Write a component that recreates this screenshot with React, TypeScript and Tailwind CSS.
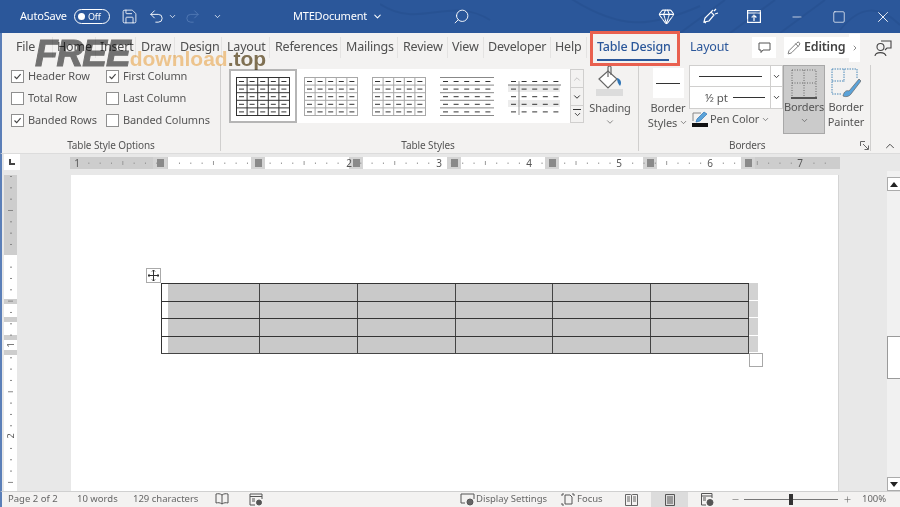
import { ChevronDown, ChevronRight, ChevronUp, Gem, Minus, Pencil, Plus, Redo2, Save, Search, Square, Undo2, X } from 'lucide-react';

const TABS: [string, string][] = [
  ['File', 'w-[51px] pl-[14px]'],
  ['Home', 'w-[43px] pl-[4px]'],
  ['Insert', 'w-[40px] pl-[4px]'],
  ['Draw', 'w-[39px] pl-[5px]'],
  ['Design', 'w-[47px] pl-[5px]'],
  ['Layout', 'w-[48px] pl-[5px]'],
  ['References', 'w-[71px] pl-[5px]'],
  ['Mailings', 'w-[57px] pl-[5px]'],
  ['Review', 'w-[50px] pl-[5px]'],
  ['View', 'w-[36px] pl-[4px]'],
  ['Developer', 'w-[67px] pl-[4px]'],
  ['Help', 'w-[36px] pl-[4px]'],
];

const OPTIONS: [string, boolean, string, boolean][] = [
  ['Header Row', true, 'First Column', true],
  ['Total Row', false, 'Last Column', false],
  ['Banded Rows', true, 'Banded Columns', false],
];

function Check({ label, checked }: { label: string; checked: boolean }) {
  return (
    <div className="flex h-[14px] items-center gap-[4px] leading-[14px]">
      <span className="flex h-[13px] w-[13px] shrink-0 items-center justify-center border border-[#8f8f8f] bg-white">
        {checked && (
          <svg width="9" height="9" viewBox="0 0 9 9" fill="none" stroke="#444" strokeWidth="1.1">
            <path d="M1.5 4.5 L3.7 6.7 L7.6 2.2" />
          </svg>
        )}
      </span>
      <span className="whitespace-nowrap">{label}</span>
    </div>
  );
}

// small preview of a table style in the gallery
function Thumb({ kind }: { kind: number }) {
  const rows = [0, 1, 2, 3, 4];
  const cols = [0, 1, 2, 3, 4];
  const line = kind === 0 ? '#333' : '#a8a8a8';
  return (
    <svg width="54" height="39" viewBox="0 0 54 39" className="shrink-0">
      {kind === 3 && <rect x="0" y="8" width="52" height="7" fill="#ececec" />}
      {kind === 3 && <rect x="0" y="23" width="52" height="7" fill="#ececec" />}
      {kind < 2 && <rect x="0.5" y="0.5" width="53" height="38" fill="none" stroke={line} />}
      {kind < 3 &&
        [1, 2, 3, 4].map((r) => <line key={r} x1="0" x2="54" y1={r * 7.6 + 0.5} y2={r * 7.6 + 0.5} stroke={kind === 2 ? '#888' : line} />)}
      {kind === 2 && <line x1="0" x2="54" y1="0.5" y2="0.5" stroke="#888" />}
      {kind === 2 && <line x1="0" x2="54" y1="38.5" y2="38.5" stroke="#888" />}
      {kind < 2 &&
        [1, 2, 3, 4].map((c) => <line key={c} y1="0" y2="39" x1={c * 10.6 + 0.5} x2={c * 10.6 + 0.5} stroke={line} />)}
      {kind === 3 && <line x1="0" x2="53" y1="8" y2="8" stroke="#777" />}
      {kind === 3 && <line x1="11" x2="11" y1="4" y2="38" stroke="#999" />}
      {rows.map((r) =>
        cols.map((c) => (
          <line key={`${r}${c}`} x1={c * 10.6 + 3} x2={c * 10.6 + 8} y1={r * 7.6 + 4.5} y2={r * 7.6 + 4.5} stroke="#333" strokeWidth="1" />
        )),
      )}
    </svg>
  );
}

function HRuler() {
  const marks = [160, 258, 356, 454, 552, 650, 748];
  const nums: [string, number][] = [['1', 77], ['2', 349], ['3', 439], ['4', 529], ['5', 619], ['6', 710], ['7', 800]];
  const ticks: number[] = [];
  for (let k = 1; k < 67; k++) ticks.push(k);
  return (
    <svg width="900" height="12" viewBox="0 0 900 12" className="block">
      <rect x="70" y="0" width="770" height="12" fill="#fff" />
      <rect x="70" y="0" width="98" height="12" fill="#cdcdcd" />
      <rect x="742" y="0" width="98" height="12" fill="#cdcdcd" />
      {marks.map((m) => (
        <rect key={m} x={m - 7} y="0" width="14" height="12" fill="#d4d4d4" />
      ))}
      {ticks.map((k) => {
        if (k % 8 === 0) return null;
        const big = k % 8 === 4;
        return <rect key={k} x={77 + k * 11.33} y={big ? 4 : 5.5} width="1" height={big ? 4 : 1.5} fill="#999" />;
      })}
      {marks.map((m) => (
        <rect key={m} x={m - 3} y="2" width="7" height="8" fill="#8a8a8a" />
      ))}
      {nums.map(([n, x]) => (
        <text key={n} x={x} y="10" fontSize="10" fill="#555" textAnchor="middle" fontFamily="Noto Sans, sans-serif">{n}</text>
      ))}
    </svg>
  );
}

function VRuler() {
  const bands = [124, 142, 160, 175];
  const ticks: number[] = [];
  for (let i = 0; i < 28; i++) ticks.push(i);
  return (
    <svg width="13" height="316" viewBox="0 0 13 316" className="block">
      <rect width="13" height="316" fill="#fff" />
      <rect width="13" height="80" fill="#cdcdcd" />
      {bands.map((b) => (
        <rect key={b} y={b} width="13" height="5" fill="#cdcdcd" />
      ))}
      {ticks.map((i) =>
        i % 8 === 7 ? null : (
          <rect key={i} x={i % 8 === 3 ? 4 : 6} y={i * 11.33 + 1} width={i % 8 === 3 ? 5 : 2} height="1" fill="#888" />
        ),
      )}
      <text x="0" y="0" fontSize="9" fill="#555" textAnchor="middle" transform="translate(10 170) rotate(-90)" fontFamily="Noto Sans, sans-serif">1</text>
      <text x="0" y="0" fontSize="9" fill="#555" textAnchor="middle" transform="translate(10 261) rotate(-90)" fontFamily="Noto Sans, sans-serif">2</text>
    </svg>
  );
}

function WordTable() {
  return (
    <div className="flex w-[603px] flex-col">
      {[0, 1, 2, 3].map((r) => (
        <div key={r} className="flex h-[17.5px]">
          <div className="grid w-[588px] grid-cols-6 border-t border-l border-[#333]">
            {[0, 1, 2, 3, 4, 5].map((c) => (
              <div key={c} className={`border-r border-[#444] bg-[#c9c9c9] ${c === 0 ? 'border-l-[6px] border-l-white' : ''}`} />
            ))}
          </div>
          <div className="mb-px w-[9px] bg-[#d2d2d2]" />
        </div>
      ))}
      <div className="flex">
        <div className="h-px w-[588px] bg-[#444]" />
        <div className="h-[14px] w-[14px] border border-[#a8a8a8] bg-white" />
      </div>
    </div>
  );
}

export default function App() {
  return (
    <div className="relative flex h-[507px] w-[900px] flex-col overflow-hidden bg-[#e8e8e8] font-['Noto_Sans',sans-serif] text-[12px] text-[#444]">
      {/* Title bar */}
      <div className="relative flex h-[33px] shrink-0 items-center bg-[#2b579a] pl-[20px] text-[11px] tracking-[-0.2px] text-white">
        <svg className="absolute right-0 top-0 opacity-20" width="520" height="33" viewBox="0 0 520 33" fill="none" stroke="#1c3f78" strokeWidth="2">
          <path d="M0 4 C40 30 70 -5 110 20 M190 -2 C240 30 270 28 320 6 M300 33 L345 0 M350 33 L395 0 M400 33 L445 0 M460 30 C480 5 500 5 520 25" />
        </svg>
        <span className="w-[54px]">AutoSave</span>
        <span className="flex h-[15px] w-[36px] items-center gap-[3px] rounded-full border border-white pl-[3px] text-[9px]">
          <span className="h-[7px] w-[7px] rounded-full bg-white" />
          Off
        </span>
        <Save className="ml-[11px] h-[17px] w-[17px]" strokeWidth={1.2} />
        <Undo2 className="ml-[10px] h-[17px] w-[17px]" strokeWidth={1.3} />
        <ChevronDown className="ml-[3px] h-[9px] w-[9px]" strokeWidth={2} />
        <Redo2 className="ml-[7px] h-[17px] w-[17px] text-[#5279b4]" strokeWidth={1.3} />
        <ChevronDown className="ml-[12px] h-[9px] w-[9px]" strokeWidth={2} />
        <span className="ml-[71px] flex w-[90px] items-center gap-[5px]">
          MTEDocument
          <ChevronDown className="h-[11px] w-[11px]" strokeWidth={2.2} />
        </span>
        <Search className="ml-[70px] h-[17px] w-[17px] -scale-x-100" strokeWidth={1.3} />
        <Gem className="ml-[188px] h-[17px] w-[17px]" strokeWidth={1.5} />
        <svg className="ml-[27px]" width="17" height="17" viewBox="0 0 17 17" fill="none" stroke="white" strokeWidth="1.2">
          <path d="M2 14 L3 10 L9 4 L12 7 L7 13 Z M9 4 L11 2 M12 3 L14 1 M13 6 L16 5 M4 15 L2 14" />
        </svg>
        <svg className="ml-[28px]" width="14" height="13" viewBox="0 0 14 13" fill="none" stroke="white" strokeWidth="1.2">
          <rect x="0.6" y="0.6" width="12.8" height="11.8" />
          <path d="M0.6 3 H13.4 M7 11 V5.5 M4.6 7.5 L7 5.2 L9.4 7.5" />
        </svg>
        <Minus className="ml-[29px] h-[14px] w-[14px]" strokeWidth={1.2} />
        <Square className="ml-[28px] h-[14px] w-[14px]" strokeWidth={1.2} />
        <X className="ml-[28px] h-[18px] w-[18px]" strokeWidth={1.2} />
      </div>

      {/* Tab row */}
      <div className="relative flex h-[29px] shrink-0 items-center border-l-2 border-[#5b7fb8] bg-[#f3f2f1] text-[12.5px] tracking-[-0.2px] text-[#505050]">
        {TABS.map(([name, cls]) => (
          <div key={name + cls} className={`flex h-[21px] items-center whitespace-nowrap border-r border-[#e4e3e2] ${cls}`}>
            {name}
          </div>
        ))}
        <div className="relative ml-[10px] w-[72px] whitespace-nowrap text-center font-medium text-[#2b579a]">
          Table Design
          <div className="absolute -bottom-[4px] left-0 h-[2px] w-full bg-[#2b579a]" />
          <div className="absolute -left-[7px] -right-[11px] -top-[7px] h-[35px] border-[3px] border-[#e9604f]" />
        </div>
        <div className="ml-[21px] w-[39px] text-[#2b579a]">Layout</div>
        <div className="ml-[23px] flex h-[21px] w-[24px] items-center justify-center bg-white">
          <svg width="13" height="12" viewBox="0 0 13 12" fill="none" stroke="#555" strokeWidth="1">
            <path d="M1 1 H12 V8 H5 L3 10.5 V8 H1 Z" />
          </svg>
        </div>
        <div className="ml-[8px] flex h-[21px] w-[65px] items-center gap-[3px] bg-white pl-[3px] font-semibold text-[#444]">
          <Pencil className="h-[14px] w-[14px]" strokeWidth={1.2} />
          Editing
        </div>
        <div className="flex h-[28px] w-[11px] items-center justify-center bg-white">
          <ChevronRight className="h-[8px] w-[8px]" strokeWidth={2} />
        </div>
        <svg className="ml-[14px]" width="18" height="18" viewBox="0 0 18 18" fill="none" stroke="#444" strokeWidth="1.1">
          <circle cx="6.5" cy="8" r="3.5" />
          <path d="M1 17 C1.5 12.5 11 12.5 12 17 M7 2 H17 V9 H13 L11 11 M11 5" />
        </svg>
      </div>

      {/* Ribbon */}
      <div className="flex h-[91px] shrink-0 border-l-2 border-[#5b7fb8] bg-[#f3f2f1] text-[11px] tracking-[-0.1px] text-[#555]">
        <div className="mb-[2px] mt-[3px] flex w-[219px] flex-col border-r border-[#d0cfce]">
          <div className="flex flex-1 pl-[9px] pt-[4px]">
            <div className="flex w-[95px] flex-col gap-[8px]">
              {OPTIONS.map(([a, on]) => (
                <Check key={a} label={a} checked={on} />
              ))}
            </div>
            <div className="flex flex-col gap-[8px]">
              {OPTIONS.map(([, , b, on]) => (
                <Check key={b} label={b} checked={on} />
              ))}
            </div>
          </div>
          <div className="h-[12px] text-center text-[10px] leading-[12px]">Table Style Options</div>
        </div>

        <div className="mb-[2px] mt-[3px] flex w-[418px] flex-col border-r border-[#d0cfce]">
          <div className="flex flex-1 pl-[8px] pt-[4px]">
            <div className="flex">
              <div className="flex h-[54px] items-center bg-white pr-[8px]">
                <div className="flex h-[54px] w-[68px] items-center justify-center border-2 border-[#b5b5b5]">
                  <Thumb kind={0} />
                </div>
                <div className="ml-[7px] flex gap-[14px]">
                  <Thumb kind={1} />
                  <Thumb kind={1} />
                  <Thumb kind={2} />
                  <Thumb kind={3} />
                </div>
              </div>
              <div className="flex h-[54px] w-[14px] flex-col border border-[#d0cfce]">
                <div className="flex h-[18px] items-center justify-center border-b border-[#d0cfce]">
                  <ChevronUp className="h-[10px] w-[10px] text-[#bbb]" />
                </div>
                <div className="flex h-[18px] items-center justify-center border-b border-[#d0cfce]">
                  <ChevronDown className="h-[10px] w-[10px] text-[#333]" strokeWidth={2.4} />
                </div>
                <div className="flex h-[16px] flex-col items-center justify-center">
                  <div className="h-px w-[8px] bg-[#333]" />
                  <ChevronDown className="h-[9px] w-[9px] text-[#333]" strokeWidth={2.4} />
                </div>
              </div>
            </div>
            <div className="-mt-[4px] ml-[6px] flex w-[40px] flex-col items-center">
              <svg width="28" height="33" viewBox="0 0 28 33" fill="none">
                <rect x="0" y="24" width="27" height="7" fill="#dcdcdc" />
                <path d="M3 14 L12 6 L21 14 L12 23 Z" stroke="#666" strokeWidth="1.2" fill="#fff" />
                <path d="M12 12 V2 Q14 0 15 2 V10" stroke="#666" strokeWidth="1.2" />
                <path d="M21 13 C25 14 26 18 24 21 C22 19 21 16 21 13 Z" fill="#2e75b6" />
              </svg>
              <span className="mt-[2px] leading-[15px]">Shading</span>
              <ChevronDown className="mt-[2px] h-[10px] w-[10px]" strokeWidth={1.6} />
            </div>
          </div>
          <div className="h-[12px] pr-[3px] text-center text-[10px] leading-[12px]">Table Styles</div>
        </div>

        <div className="mb-[2px] mt-[3px] flex w-[232px] flex-col border-r border-[#d0cfce]">
          <div className="flex flex-1">
            <div className="ml-[9px] flex w-[40px] flex-col items-center pt-[3px]">
              <div className="flex h-[30px] w-[31px] items-center justify-center bg-white">
                <div className="h-px w-[24px] bg-[#333]" />
              </div>
              <span className="mt-[2px] leading-[15px]">Border</span>
              <span className="flex items-center gap-[2px] whitespace-nowrap leading-[15px]">
                Styles
                <ChevronDown className="h-[9px] w-[9px]" strokeWidth={1.8} />
              </span>
            </div>
            <div className="ml-[1px] flex w-[94px] flex-col">
              <div className="flex h-[44px] flex-col border border-[#d0cfce] bg-white">
                <div className="flex h-[21px] items-center border-b border-[#d0cfce]">
                  <div className="ml-[9px] h-px w-[63px] bg-[#333]" />
                  <div className="ml-[8px] flex h-full flex-1 items-center justify-center border-l border-[#d0cfce]">
                    <ChevronDown className="h-[9px] w-[9px] text-[#333]" strokeWidth={2.4} />
                  </div>
                </div>
                <div className="flex flex-1 items-center text-[11.5px]">
                  <span className="ml-[15px] w-[28px]">½ pt</span>
                  <div className="h-px w-[32px] bg-[#333]" />
                  <div className="ml-[5px] flex h-full flex-1 items-center justify-center border-l border-[#d0cfce]">
                    <ChevronDown className="h-[9px] w-[9px] text-[#333]" strokeWidth={2.4} />
                  </div>
                </div>
              </div>
              <div className="mt-[2px] flex items-center gap-[2px] pl-[3px]">
                <svg width="16" height="16" viewBox="0 0 16 16" fill="none">
                  <rect x="0" y="12" width="16" height="4" fill="#111" />
                  <path d="M1 10 V2 H9" stroke="#888" />
                  <path d="M4 11 L5 8 L12 1 L15 3 L8 10 Z" fill="#5ba3d9" stroke="#2e75b6" strokeWidth="0.7" />
                </svg>
                <span className="whitespace-nowrap">Pen Color</span>
                <ChevronDown className="h-[9px] w-[9px]" strokeWidth={1.8} />
              </div>
            </div>
            <div className="flex h-[69px] w-[42px] flex-col items-center border border-[#a8a8a8] bg-[#cbcbcb]">
              <svg className="mt-[3px]" width="26" height="30" viewBox="0 0 26 30" fill="none" stroke="#666" strokeDasharray="1 1.5">
                <path d="M1 1 H25 V28 M1 1 V28 M13 1 V28 M1 14 H25" />
                <path d="M0 29 H26" stroke="#222" strokeWidth="1.4" strokeDasharray="none" />
              </svg>
              <span className="leading-[15px]">Borders</span>
              <ChevronDown className="mt-[2px] h-[9px] w-[9px]" strokeWidth={1.8} />
            </div>
            <div className="ml-[3px] flex w-[36px] flex-col items-center pt-[3px]">
              <svg width="30" height="31" viewBox="0 0 30 31" fill="none" stroke="#4a88b8">
                <path d="M1 1 H26 V10 M1 1 V26 H10 M13 1 V14 M1 13 H13" strokeDasharray="1.5 1" />
                <path d="M12 28 C13 23 16 22 18 23 L28 11 L30 13 L20 26 C18 29 14 29 12 28 Z" fill="#5ba3d9" stroke="#666" strokeWidth="0.7" />
              </svg>
              <span className="leading-[15px]">Border</span>
              <span className="leading-[15px]">Painter</span>
            </div>
          </div>
          <div className="flex h-[12px] items-center text-[10px] leading-[12px]">
            <span className="ml-[90px]">Borders</span>
            <svg className="ml-[94px]" width="9" height="9" viewBox="0 0 9 9" fill="none" stroke="#666">
              <path d="M0.5 5 V0.5 H5 M3 3 L8 8 M4.5 8.5 H8.5 V4.5" />
            </svg>
          </div>
        </div>
        <div className="flex flex-1 items-end justify-end pr-[3px]">
          <ChevronUp className="h-[14px] w-[14px] text-[#444]" strokeWidth={1.6} />
        </div>
      </div>

      {/* Horizontal ruler */}
      <div className="relative flex h-[18px] shrink-0 items-center border-t border-[#dcdcdc] border-l-2 border-l-[#5b7fb8]">
        <div className="-ml-[2px]">
          <HRuler />
        </div>
        <div className="absolute left-[2px] top-0 flex h-[16px] w-[16px] items-center justify-center bg-white">
          <div className="h-[6px] w-[6px] border-b-2 border-l-2 border-[#444]" />
        </div>
      </div>

      {/* Document area */}
      <div className="flex min-h-0 flex-1 border-l-2 border-[#5b7fb8]">
        <div className="w-[69px] shrink-0 pl-[2px] pt-[4px]">
          <VRuler />
        </div>
        <div className="relative mt-[4px] w-[768px] shrink-0 border-r border-[#d4d4d4] bg-white pl-[90px] pt-[108px]">
          <div className="absolute left-[75px] top-[93px] flex h-[15px] w-[15px] items-center justify-center border border-[#aaa] bg-white">
            <svg width="11" height="11" viewBox="0 0 11 11" fill="none" stroke="#333">
              <path d="M5.5 0 V11 M0 5.5 H11 M4 1.5 L5.5 0 L7 1.5 M4 9.5 L5.5 11 L7 9.5 M1.5 4 L0 5.5 L1.5 7 M9.5 4 L11 5.5 L9.5 7" />
            </svg>
          </div>
          <WordTable />
        </div>
        <div className="w-[48px] shrink-0" />
        <div className="flex flex-1 flex-col bg-[#f1f1f1] pt-[6px]">
          <div className="flex h-[14px] items-center justify-center border border-r-0 border-[#ababab] bg-white">
            <div className="h-0 w-0 border-x-[4px] border-b-[5px] border-x-transparent border-b-[#222]" />
          </div>
          <div className="mt-[145px] h-[43px] border border-r-0 border-[#9a9a9a] bg-white" />
          <div className="flex-1" />
          <div className="flex h-[14px] items-center justify-center border border-r-0 border-[#ababab] bg-white">
            <div className="h-0 w-0 border-x-[4px] border-t-[5px] border-x-transparent border-t-[#222]" />
          </div>
        </div>
      </div>

      {/* Status bar */}
      <div className="flex h-[16px] shrink-0 items-center border-t border-[#d0d0d0] border-l-2 border-l-[#5b7fb8] bg-[#f3f2f1] pl-[6px] text-[9.5px] text-[#666]">
        <span className="w-[69px] whitespace-nowrap">Page 2 of 2</span>
        <span className="w-[56px] whitespace-nowrap">10 words</span>
        <span className="w-[82px] whitespace-nowrap">129 characters</span>
        <svg width="14" height="13" viewBox="0 0 14 13" fill="none" stroke="#555">
          <path d="M7 2 C5 0.5 3 0.5 1 1 V10 C3 9.5 5 9.5 7 11 C9 9.5 11 9.5 13 10 V1 C11 0.5 9 0.5 7 2 V11" />
        </svg>
        <svg className="ml-[20px]" width="14" height="13" viewBox="0 0 14 13" fill="none" stroke="#555">
          <path d="M1 1 H13 V6 M1 1 V12 H6 M1 3.5 H13 M3 6 H6 M3 8 H6" />
          <circle cx="10" cy="9.5" r="2.5" fill="#555" />
        </svg>
        <svg className="ml-[197px]" width="15" height="13" viewBox="0 0 15 13" fill="none" stroke="#555">
          <path d="M5 10 H1 V1 H14 V6" />
          <circle cx="10" cy="9" r="3" fill="#666" />
        </svg>
        <span className="ml-[1px] w-[85px] whitespace-nowrap">Display Settings</span>
        <svg width="14" height="13" viewBox="0 0 14 13" fill="none" stroke="#555">
          <path d="M4 2 H9 L11 4 V11 H4 Z M1 3 V1 H3 M13 3 V1 H11 M1 10 V12 H3" />
        </svg>
        <span className="ml-[2px] w-[48px] whitespace-nowrap">Focus</span>
        <svg width="13" height="12" viewBox="0 0 13 12" fill="none" stroke="#666">
          <path d="M0.5 0.5 H5.5 C6 0.5 6.5 1 6.5 1.5 C6.5 1 7 0.5 7.5 0.5 H12.5 V11.5 H0.5 Z M6.5 1.5 V11 M2 3 H5 M2 5 H5 M2 7 H5 M8 3 H11 M8 5 H11 M8 7 H11" />
        </svg>
        <div className="ml-[13px] flex h-full w-[37px] items-center justify-center bg-[#dcdcdc]">
          <svg width="10" height="12" viewBox="0 0 10 12" fill="none" stroke="#555">
            <path d="M0.5 0.5 H9.5 V11.5 H0.5 Z M2 3 H8 M2 5 H8 M2 7 H8 M2 9 H8" />
          </svg>
        </div>
        <svg className="ml-[13px]" width="13" height="13" viewBox="0 0 13 13" fill="none" stroke="#555">
          <path d="M0.5 0.5 H11 V5 M0.5 0.5 V12 H5 M0.5 3 H11 M2 5 H5 M2 7 H5" />
          <circle cx="9" cy="9.5" r="3" fill="#555" />
        </svg>
        <Minus className="ml-[17px] h-[9px] w-[9px]" strokeWidth={1.6} />
        <div className="relative ml-[4px] h-px w-[94px] bg-[#777]">
          <div className="absolute left-[45px] -top-[5px] h-[11px] w-[4px] bg-[#333]" />
        </div>
        <Plus className="ml-[5px] h-[9px] w-[9px]" strokeWidth={1.6} />
        <span className="ml-[10px]">100%</span>
      </div>

      {/* Watermark over the tabs */}
      <div className="pointer-events-none absolute left-[35px] top-[36px] flex items-baseline whitespace-nowrap font-['Liberation_Sans',sans-serif] font-bold mix-blend-multiply">
        <span className="text-[37px] leading-[36px] italic tracking-[-1px] text-[#777] [-webkit-text-stroke:1px_#777]">FREE</span>
        <span className="text-[21px] leading-[36px] text-[#f9cf95]">download</span>
        <span className="text-[21px] leading-[36px] text-[#857657]">.top</span>
      </div>
    </div>
  );
}
